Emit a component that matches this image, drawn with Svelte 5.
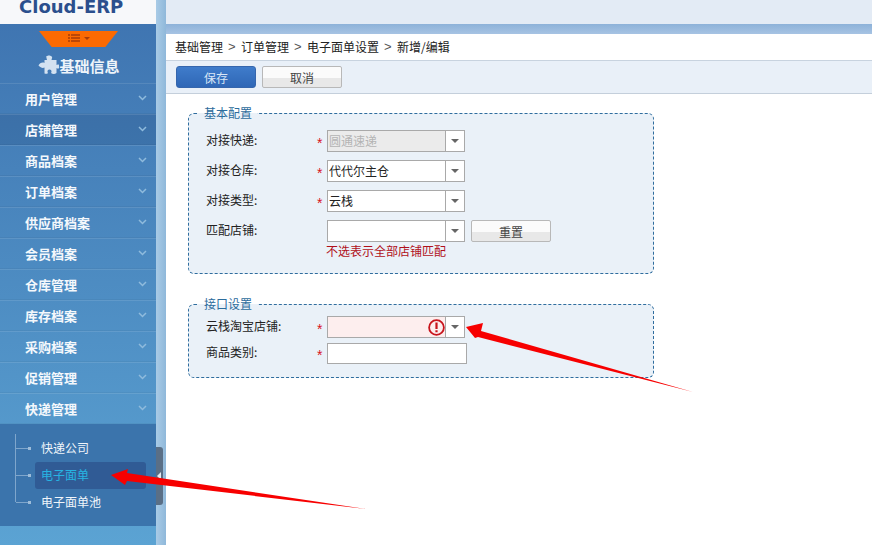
<script>
  const menus = ['用户管理', '店铺管理', '商品档案', '订单档案', '供应商档案', '会员档案', '仓库管理', '库存档案', '采购档案', '促销管理', '快递管理'];
  const subs = [
    { name: '快递公司' },
    { name: '电子面单', active: true },
    { name: '电子面单池' }
  ];
  const crumbs = ['基础管理', '订单管理', '电子面单设置', '新增/编辑'];
</script>

<div class="page">
  <aside class="sidebar">
    <div class="logo"><span>Cloud-ERP</span></div>
    <div class="nav-head">
      <div class="tab">
        <svg width="22" height="9" viewBox="0 0 22 9">
          <path d="M0 1h2M0 4h2M0 7h2M3 1h9M3 4h9M3 7h9" stroke="#a83c08" stroke-width="1.6" />
          <path d="M16 3h6l-3 3z" fill="#a83c08" />
        </svg>
      </div>
      <div class="title">
        <svg width="21" height="21" viewBox="0 0 21 21">
          <path d="M8 2c1-2 5-2 6 0 .5 1-.5 2-.5 3h5v5c1-1 3-1 3 1.500s-2 2.500-3 1.500v5c-2 1.500-4 1-5.500 0 1-1.500.5-3.500-1.500-3.500s-2.500 2-1.500 3.500c-1 1-2 1-3.500.5v-6c-2 1-4 0-6-2 1-2.500 4-3.500 6-2.500V5h2.500c0-1-1-2-.5-3z" fill="#d3e2f1" />
        </svg>
        <span>基础信息</span>
      </div>
    </div>

    {#each menus as item, i}
      <div class="menu-item" class:dark={i === 1}>
        <span>{item}</span>
        <svg width="9" height="6" viewBox="0 0 9 6"><path d="M1 1l3.500 3.500L8 1" fill="none" stroke="#8fbbdd" stroke-width="1.500" /></svg>
      </div>
    {/each}

    <div class="submenu">
      <div class="tree"></div>
      {#each subs as sub}
        <div class="sub-row">
          <i class="branch"></i>
          <span class="sub-name" class:active={sub.active}>{sub.name}</span>
        </div>
      {/each}
    </div>
  </aside>

  <div class="gutter">
    <div class="handle"></div>
  </div>

  <div class="right">
    <div class="topbar"></div>
    <div class="band"></div>
    <main class="panel">
      <div class="crumbs">
        {#each crumbs as crumb, i}
          {#if i > 0}<span class="sep">&gt;</span>{/if}
          <span>{crumb}</span>
        {/each}
      </div>
      <div class="toolbar">
        <button class="btn primary">保存</button>
        <button class="btn">取消</button>
      </div>

      <div class="content">
        <fieldset class="box first">
          <legend>基本配置</legend>
          <div class="row">
            <span class="label">对接快递:</span><span class="star">*</span>
            <div class="combo disabled"><span class="value">圆通速递</span><span class="drop"><i></i></span></div>
          </div>
          <div class="row">
            <span class="label">对接仓库:</span><span class="star">*</span>
            <div class="combo"><span class="value">代代尔主仓</span><span class="drop"><i></i></span></div>
          </div>
          <div class="row">
            <span class="label">对接类型:</span><span class="star">*</span>
            <div class="combo"><span class="value">云栈</span><span class="drop"><i></i></span></div>
          </div>
          <div class="row">
            <span class="label">匹配店铺:</span><span class="star"></span>
            <div class="combo"><span class="value"></span><span class="drop"><i></i></span></div>
            <button class="btn reset">重置</button>
          </div>
          <div class="hint">不选表示全部店铺匹配</div>
        </fieldset>

        <fieldset class="box second">
          <legend>接口设置</legend>
          <div class="row tight">
            <span class="label">云栈淘宝店铺:</span><span class="star">*</span>
            <div class="combo error">
              <span class="value"></span>
              <svg class="warn" width="17" height="17" viewBox="0 0 17 17">
                <circle cx="8.500" cy="8.500" r="7.400" fill="none" stroke="#c8141c" stroke-width="1.800" />
                <path d="M8.500 3.500v6.500M8.500 11.300v2" stroke="#c8141c" stroke-width="2.200" />
              </svg>
              <span class="drop"><i></i></span>
            </div>
          </div>
          <div class="row tight">
            <span class="label">商品类别:</span><span class="star">*</span>
            <div class="text-input"></div>
          </div>
        </fieldset>
      </div>
    </main>
  </div>

  <!-- red annotation arrows drawn over the screenshot -->
  <svg class="marks" width="872" height="545" viewBox="0 0 872 545">
    <path d="M466 327L483 323L481 331L693 392L478 337L475 338z" fill="#f70000" />
    <path d="M111 475L128 469L127 473L366 509L127 481L125 485z" fill="#f70000" />
  </svg>
</div>

<style>
  :global(body) {
    margin: 0;
    background: #fff;
  }

  .page {
    position: relative;
    display: flex;
    width: 872px;
    height: 545px;
    overflow: hidden;
    font-family: "Noto Sans CJK SC", "Liberation Sans", sans-serif;
    font-size: 12px;
    color: #222;
  }

  .sidebar {
    width: 156px;
    flex: none;
    display: flex;
    flex-direction: column;
    background: linear-gradient(#3e73b0, #5ba3d3);
  }

  .logo {
    height: 24px;
    box-sizing: border-box;
    background: #f7f8fa;
    overflow: hidden;
    padding-left: 19px;
  }

  .logo span {
    display: block;
    font-family: "DejaVu Sans", sans-serif;
    font-size: 18px;
    font-weight: bold;
    line-height: 13px;
    color: #2b4f8d;
  }

  .nav-head {
    height: 59px;
    box-sizing: border-box;
    padding-top: 7px;
    display: flex;
    flex-direction: column;
    align-items: center;
  }

  .tab {
    width: 79px;
    height: 15px;
    margin-right: -1px;
    background: #fb6a02;
    clip-path: polygon(0 0, 100% 0, 84% 100%, 16% 100%);
    display: flex;
    align-items: center;
    justify-content: center;
    padding-bottom: 1px;
  }

  .title {
    display: flex;
    align-items: center;
    margin-top: 8px;
    margin-left: 2px;
    color: #eef4fa;
    font-size: 15px;
    font-weight: bold;
    line-height: 21px;
  }

  .menu-item {
    height: 31px;
    box-sizing: border-box;
    padding: 0 9px 1px 25px;
    display: flex;
    align-items: center;
    justify-content: space-between;
    border-top: 1px solid rgba(255, 255, 255, 0.1);
    border-bottom: 1px solid rgba(0, 0, 0, 0.04);
    color: #f4f8fc;
    font-size: 13px;
    font-weight: bold;
  }

  .menu-item.dark {
    background: rgba(30, 70, 120, 0.22);
  }

  .submenu {
    position: relative;
    height: 102px;
    box-sizing: border-box;
    padding-top: 11px;
    background: #3b74ac;
  }

  .tree {
    position: absolute;
    left: 15px;
    top: 10px;
    width: 1px;
    height: 68px;
    background: #7fa6cc;
  }

  .sub-row {
    height: 27px;
    display: flex;
    align-items: center;
    padding-left: 16px;
  }

  .branch {
    position: relative;
    width: 15px;
    height: 1px;
    background: #7fa6cc;
  }

  .branch::after {
    content: "";
    position: absolute;
    right: 0;
    top: -1px;
    width: 3px;
    height: 3px;
    background: #9dbcd9;
  }

  .sub-name {
    margin-left: 4px;
    padding-left: 6px;
    width: 105px;
    height: 27px;
    line-height: 26px;
    border-radius: 3px;
    color: #f0f5fa;
  }

  .sub-name.active {
    background: #305b95;
    color: #27b4e2;
  }

  .gutter {
    position: relative;
    width: 10px;
    flex: none;
    background: linear-gradient(to right, #a9cbe6, #8fb8da);
  }

  .handle {
    position: absolute;
    left: 0;
    top: 447px;
    width: 7px;
    height: 58px;
    border-radius: 0 3px 3px 0;
    background: #5a6f86;
  }

  .handle::after {
    content: "";
    position: absolute;
    left: 1px;
    top: 25px;
    border: 4px solid transparent;
    border-left: 0;
    border-right: 4px solid #e4ebf2;
  }

  .right {
    flex: 1;
    display: flex;
    flex-direction: column;
    min-width: 0;
  }

  .topbar {
    height: 24px;
    background: #e3ebf5;
  }

  .band {
    height: 10px;
    background: linear-gradient(#8db2d9, #a6c3e3);
  }

  .panel {
    flex: 1;
    background: #fff;
  }

  .crumbs {
    height: 27px;
    box-sizing: border-box;
    padding: 0 0 2px 9px;
    display: flex;
    align-items: center;
    gap: 5px;
    border-bottom: 1px solid #c8d3df;
    background: #fff;
    color: #222;
  }

  .sep {
    width: 8px;
    font-family: "Liberation Sans", sans-serif;
    color: #555;
    font-size: 13px;
  }

  .toolbar {
    height: 33px;
    box-sizing: border-box;
    padding: 5px 0 0 10px;
    display: flex;
    align-items: flex-start;
    gap: 6px;
    background: #e9f0f8;
    border-bottom: 1px solid #c4cfdb;
  }

  .btn {
    width: 80px;
    height: 22px;
    padding: 0;
    border: 1px solid #b8b8b8;
    border-radius: 2px;
    background: linear-gradient(#fbfbfb 55%, #e8e8e8 55%);
    font: inherit;
    color: #444;
  }

  .btn.primary {
    border-color: #3566ad;
    background: linear-gradient(#3f7ccb, #2f67b6);
    color: #d8e6f6;
    border-radius: 3px;
  }

  .content {
    padding: 12px 0 0 22px;
  }

  .box {
    width: 466px;
    box-sizing: border-box;
    margin: 0;
    padding: 0;
    min-width: 0;
    border: 1px dashed #2f6d9e;
    border-radius: 6px;
    background: #eaf1f8;
  }

  .box.first {
    height: 168px;
    padding: 6px 0 0 17px;
  }

  .box.second {
    height: 81px;
    margin-top: 23px;
    padding: 3px 0 0 17px;
  }

  legend {
    margin-left: -7px;
    padding: 0 5px;
    line-height: 14px;
    color: #2c6c9c;
  }

  .row {
    display: flex;
    align-items: center;
    height: 30px;
  }

  .row.tight {
    height: 26px;
  }

  .label {
    width: 111px;
    flex: none;
    padding-bottom: 3px;
  }

  .star {
    width: 10px;
    flex: none;
    color: #d8121c;
    font-family: "Liberation Sans", sans-serif;
    font-size: 14px;
    line-height: 14px;
    padding-top: 3px;
  }

  .combo {
    width: 138px;
    height: 22px;
    box-sizing: border-box;
    display: flex;
    align-items: center;
    border: 1px solid #a9a9a9;
    background: #fff;
  }

  .combo.disabled {
    background: #ebebeb;
    color: #b4b4b4;
  }

  .combo.disabled .drop {
    background: #fff;
  }

  .combo.error {
    background: #fdeeee;
  }

  .value {
    flex: 1;
    padding-left: 1px;
    line-height: 20px;
  }

  .warn {
    flex: none;
  }

  .drop {
    flex: none;
    width: 18px;
    height: 20px;
    border-left: 1px solid #a9a9a9;
    background: #fff;
    display: flex;
    align-items: center;
    justify-content: center;
  }

  .drop i {
    border: 4px solid transparent;
    border-top: 4px solid #666;
    border-bottom: 0;
  }

  .btn.reset {
    margin-left: 6px;
    width: 80px;
    height: 22px;
  }

  .hint {
    margin: -2px 0 0 120px;
    line-height: 14px;
    color: #b0101a;
  }

  .text-input {
    width: 140px;
    height: 21px;
    box-sizing: border-box;
    border: 1px solid #a9a9a9;
    background: #fff;
  }

  .marks {
    position: absolute;
    left: 0;
    top: 0;
    pointer-events: none;
  }
</style>
